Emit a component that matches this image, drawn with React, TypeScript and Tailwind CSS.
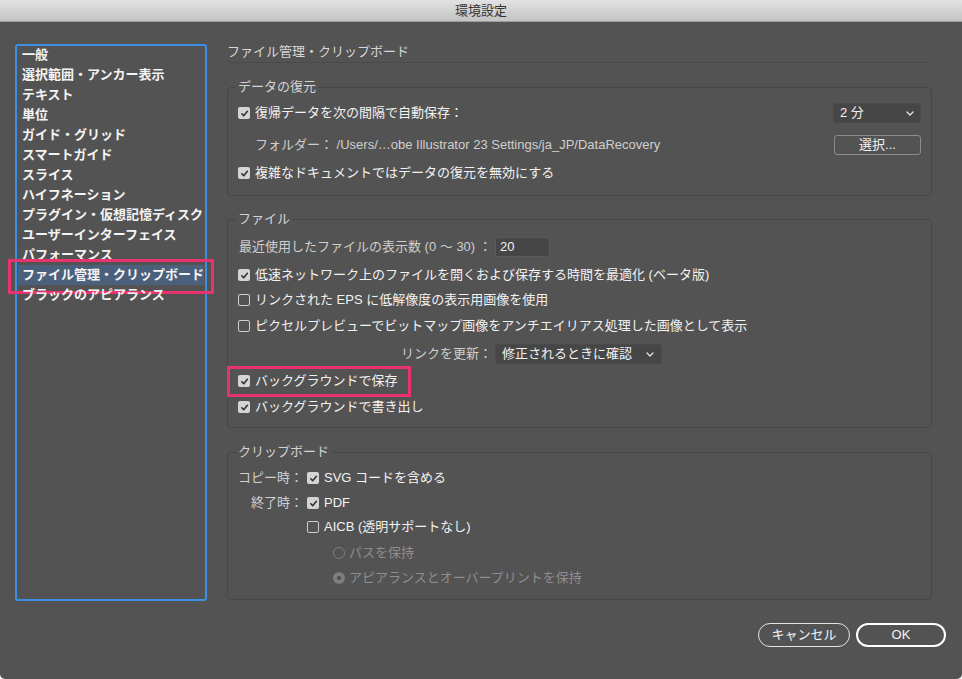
import React from "react";

const sections = [
  "一般",
  "選択範囲・アンカー表示",
  "テキスト",
  "単位",
  "ガイド・グリッド",
  "スマートガイド",
  "スライス",
  "ハイフネーション",
  "プラグイン・仮想記憶ディスク",
  "ユーザーインターフェイス",
  "パフォーマンス",
  "ファイル管理・クリップボード",
  "ブラックのアピアランス",
];

const SELECTED = "ファイル管理・クリップボード";

const Check = ({ checked }: { checked?: boolean }) =>
  checked ? (
    <span className="flex h-[12px] w-[12px] shrink-0 items-center justify-center rounded-[2px] bg-[#d4d4d4]">
      <svg width="9" height="9" viewBox="0 0 10 10">
        <path d="M2 5.3 4.1 7.4 8.2 2.6" fill="none" stroke="#333" strokeWidth="1.8" strokeLinecap="round" strokeLinejoin="round" />
      </svg>
    </span>
  ) : (
    <span className="h-[12px] w-[12px] shrink-0 rounded-[2px] border border-[#cfcfcf]" />
  );

const Radio = ({ on }: { on?: boolean }) =>
  on ? (
    <span className="flex h-[12px] w-[12px] shrink-0 items-center justify-center rounded-full bg-[#7e7e7e]">
      <span className="h-[4px] w-[4px] rounded-full bg-[#4e4e4e]" />
    </span>
  ) : (
    <span className="h-[12px] w-[12px] shrink-0 rounded-full border border-[#7e7e7e]" />
  );

const Chevron = () => (
  <svg width="8" height="5" viewBox="0 0 8 5">
    <path d="M1 1l3 3 3-3" fill="none" stroke="#e6e6e6" strokeWidth="1.3" strokeLinecap="round" strokeLinejoin="round" />
  </svg>
);

const CheckRow = ({ checked, label, className = "" }: { checked?: boolean; label: string; className?: string }) => (
  <div className={`flex h-[20px] items-center gap-[5px] whitespace-nowrap text-[#f2f2f2] ${className}`}>
    <Check checked={checked} />
    <span>{label}</span>
  </div>
);

const Group = ({ title, className = "", children }: { title: string; className?: string; children: React.ReactNode }) => (
  <fieldset className={`rounded-[4px] border border-[#474747] px-[10px] ${className}`}>
    <legend className="ml-[-2px] px-[2px] leading-[16px] text-[#d4d4d4]">{title}</legend>
    {children}
  </fieldset>
);

export default function App() {
  return (
    <div className="h-[679px] w-[962px] bg-white font-['Liberation_Sans','Noto_Sans_CJK_JP',sans-serif] text-[13px] leading-[20px]">
      <div className="flex h-full flex-col overflow-hidden rounded-b-[5px] bg-[#535353]">
        {/* title bar */}
        <div className="flex h-[22px] shrink-0 items-center justify-center border-b border-[#9c9c9c] bg-gradient-to-b from-[#e2e2e2] to-[#c3c3c3] text-[13px] text-[#333]">
          環境設定
        </div>

        <div className="flex items-start pl-[15px]">
          {/* section list */}
          <div className="mt-[22px] h-[557px] w-[192px] rounded-[3px] border-2 border-[#3d8fe4]">
            <ul className="-mt-px font-bold text-[#f4f4f4]">
              {sections.map((s) => (
                <li key={s} className={`relative mx-px h-[20px] whitespace-nowrap pl-[4px] ${s === SELECTED ? "bg-[#4b607a]" : ""}`}>
                  {s}
                  {s === SELECTED && (
                    <span className="absolute -left-[10px] -top-[6px] h-[35px] w-[206px] border-[3px] border-[#e8336f]" />
                  )}
                </li>
              ))}
            </ul>
          </div>

          {/* settings */}
          <div className="ml-[20px] mt-[20px] flex w-[705px] flex-col">
            <div className="h-[21px] border-b border-[#4a4a4a] text-[#d8d8d8]">ファイル管理・クリップボード</div>

            <Group title="データの復元" className="mt-[16px] pb-[12px]">
              <div className="mt-[8px] flex h-[20px] items-center justify-between">
                <CheckRow checked label="復帰データを次の間隔で自動保存：" />
                <div className="flex h-[20px] w-[88px] items-center justify-between rounded-[3px] border border-[#4a4a4a] bg-[#464646] pl-[6px] pr-[6px] text-[#f2f2f2]">
                  <span>2 分</span>
                  <Chevron />
                </div>
              </div>
              <div className="mt-[12px] flex h-[20px] items-center justify-between">
                <span className="whitespace-nowrap pl-[17px] text-[#cfcfcf]">
                  フォルダー： /Users/…obe Illustrator 23 Settings/ja_JP/DataRecovery
                </span>
                <div className="flex h-[20px] w-[87px] items-center justify-center rounded-[3px] border border-[#8c8c8c] text-[#f2f2f2]">
                  選択...
                </div>
              </div>
              <CheckRow checked className="mt-[8px]" label="複雑なドキュメントではデータの復元を無効にする" />
            </Group>

            <Group title="ファイル" className="mt-[15px] pb-[10px]">
              <div className="mt-[10px] flex h-[20px] items-center">
                <span className="w-[257px] whitespace-nowrap pl-px text-[#cfcfcf]">最近使用したファイルの表示数 (0 〜 30) ：</span>
                <div className="h-[20px] w-[55px] rounded-[2px] border border-[#5a5a5a] bg-[#464646] pl-[4px] leading-[18px] text-[#f2f2f2]">
                  20
                </div>
              </div>
              <CheckRow checked className="mt-[8px]" label="低速ネットワーク上のファイルを開くおよび保存する時間を最適化 (ベータ版)" />
              <CheckRow className="mt-[5px]" label="リンクされた EPS に低解像度の表示用画像を使用" />
              <CheckRow className="mt-[6px]" label="ピクセルプレビューでビットマップ画像をアンチエイリアス処理した画像として表示" />
              <div className="mt-[8px] flex h-[20px] items-center">
                <span className="w-[257px] pr-[3px] text-right text-[#cfcfcf]">リンクを更新：</span>
                <div className="flex h-[20px] w-[167px] items-center justify-between rounded-[3px] border border-[#4a4a4a] bg-[#464646] pl-[6px] pr-[7px] text-[#f2f2f2]">
                  <span>修正されるときに確認</span>
                  <Chevron />
                </div>
              </div>
              <div className="relative mt-[7px]">
                <CheckRow checked label="バックグラウンドで保存" />
                <span className="absolute -left-[11px] -top-[5px] h-[31px] w-[184px] border-[3px] border-[#e8336f]" />
              </div>
              <CheckRow checked className="mt-[6px]" label="バックグラウンドで書き出し" />
            </Group>

            <Group title="クリップボード" className="mt-[16px] pb-[11px]">
              <div className="mt-[8px] flex h-[20px] items-center">
                <span className="w-[66px] whitespace-nowrap text-[#cfcfcf]">コピー時：</span>
                <CheckRow checked className="ml-[3px]" label="SVG コードを含める" />
              </div>
              <div className="mt-[5px] flex h-[20px] items-center">
                <span className="w-[66px] whitespace-nowrap pr-[1px] text-right text-[#cfcfcf]">終了時：</span>
                <CheckRow checked className="ml-[3px]" label="PDF" />
              </div>
              <CheckRow className="ml-[69px] mt-[4px]" label="AICB (透明サポートなし)" />
              <div className="ml-[95px] mt-[6px] flex h-[20px] items-center gap-[4px] text-[#8e8e8e]">
                <Radio />
                <span>パスを保持</span>
              </div>
              <div className="ml-[95px] mt-[5px] flex h-[20px] items-center gap-[4px] text-[#8e8e8e]">
                <Radio on />
                <span>アピアランスとオーバープリントを保持</span>
              </div>
            </Group>
          </div>
        </div>

        {/* buttons */}
        <div className="mt-[22px] flex justify-end gap-[6px] pr-[16px]">
          <button className="h-[24px] w-[92px] rounded-full border-[1.5px] border-[#e4e4e4] text-[#f4f4f4]">キャンセル</button>
          <button className="h-[24px] w-[90px] rounded-full border-2 border-white text-[#f4f4f4]">OK</button>
        </div>
      </div>
    </div>
  );
}
